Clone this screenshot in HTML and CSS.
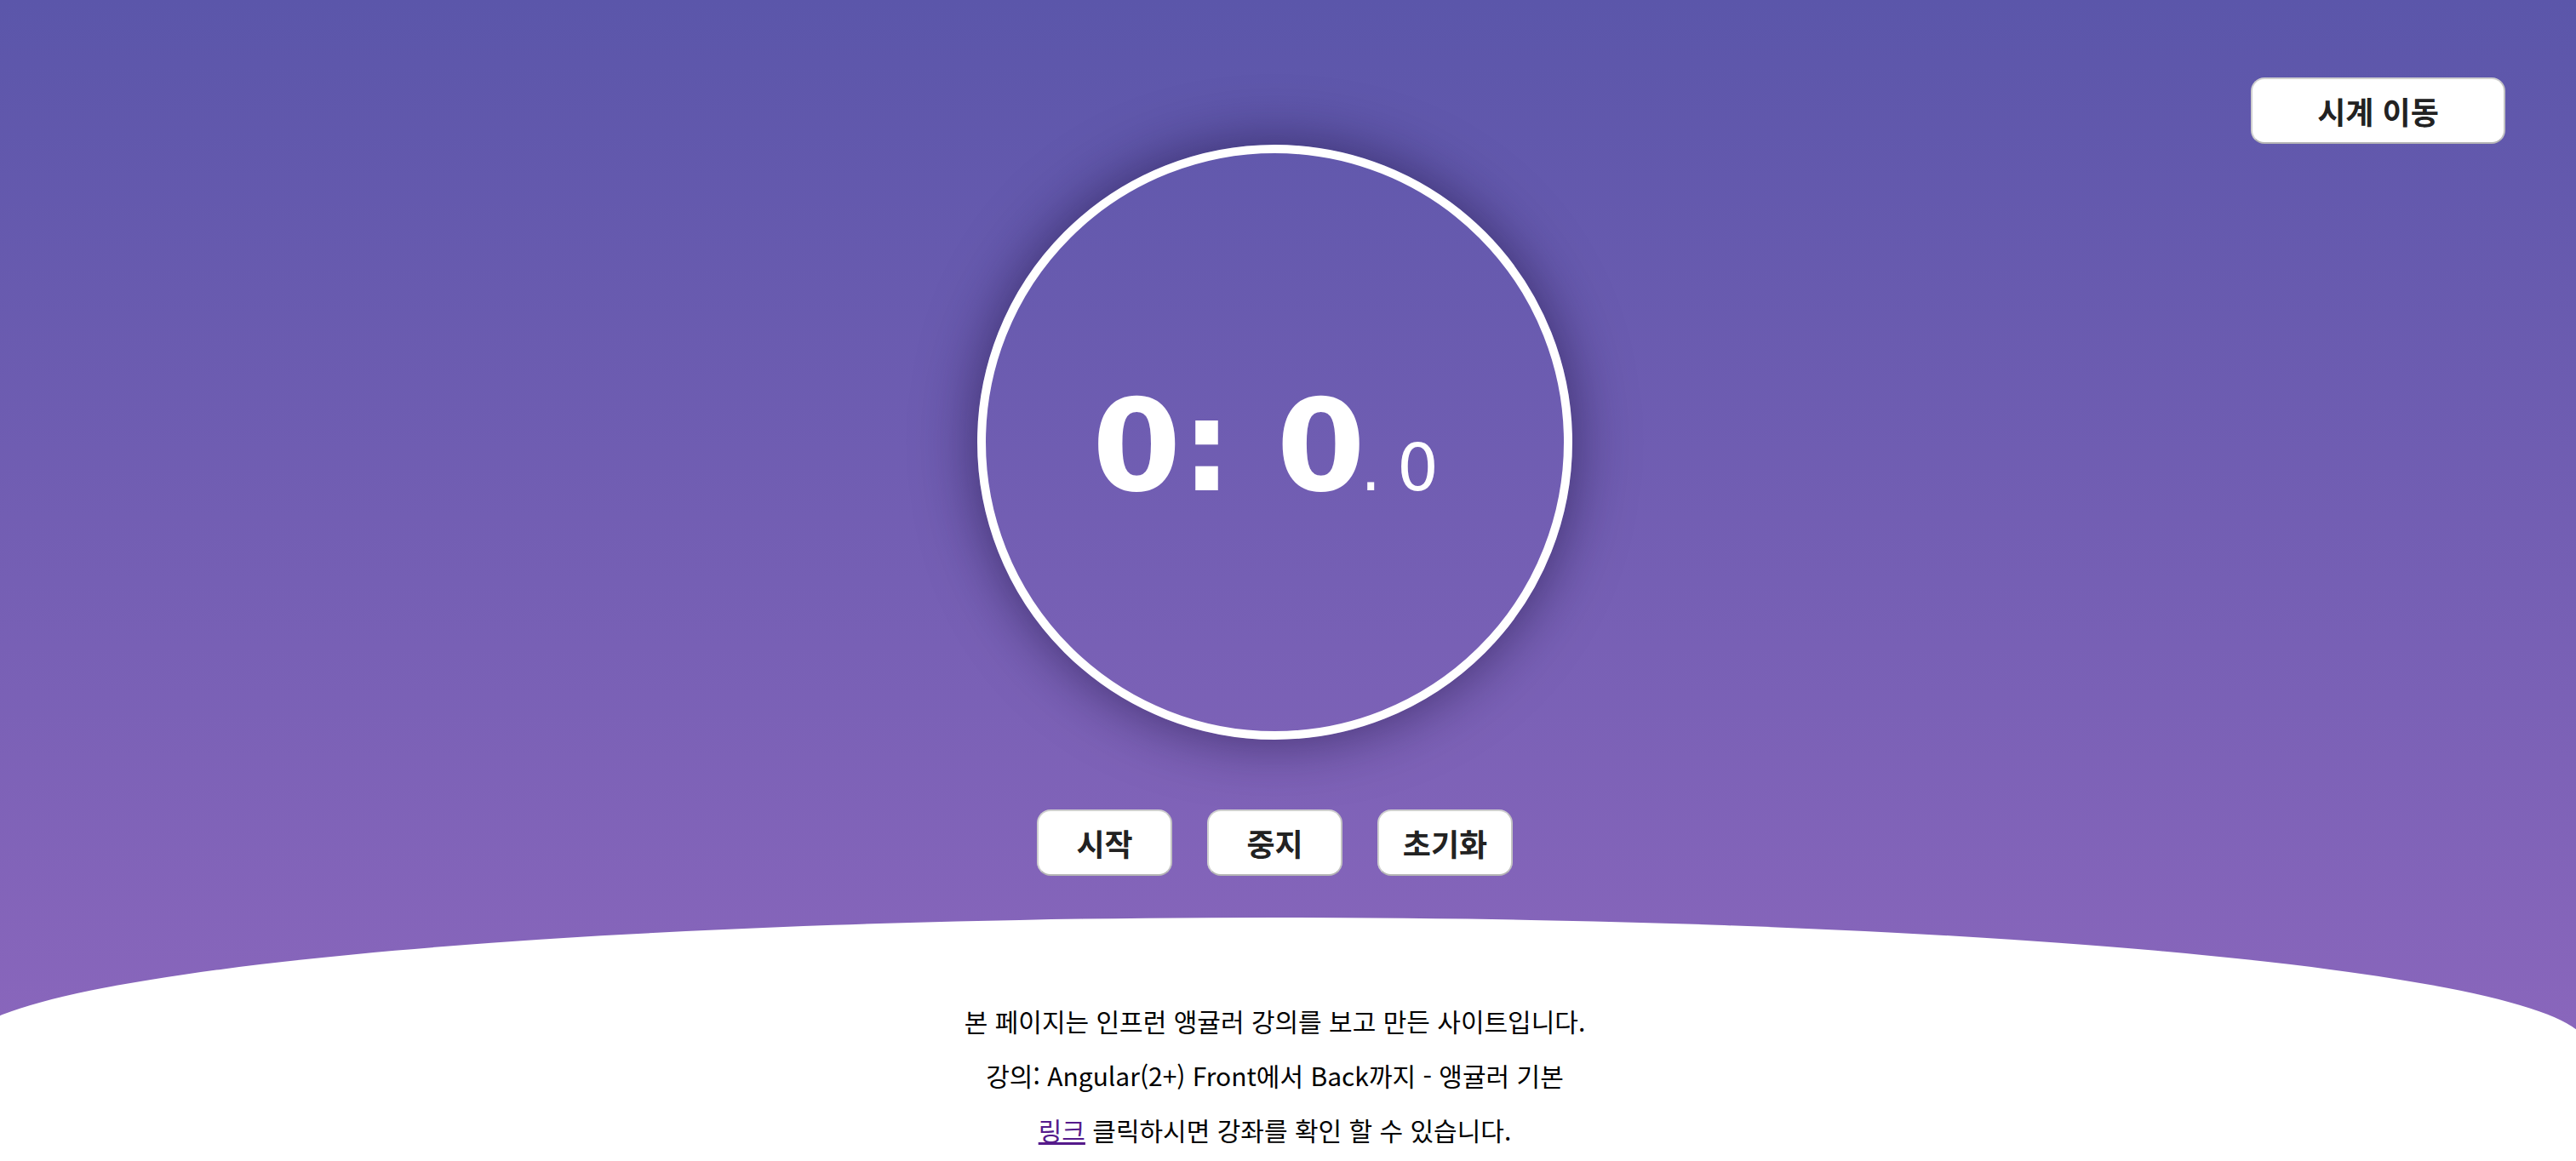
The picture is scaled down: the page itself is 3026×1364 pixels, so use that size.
FILE: index.html
```html
<!DOCTYPE html>
<html lang="ko">
<head>
<meta charset="utf-8">
<title>스톱워치</title>
<link rel="stylesheet" href="styles.css">
</head>
<body>
<div class="page">
  <header class="topbar">
    <button class="btn btn-wide" type="button">시계 이동</button>
  </header>
  <main class="main">
    <div class="dial">
      <div class="time"><span class="big">0: 0</span><span class="small">. 0</span></div>
    </div>
    <div class="controls">
      <button class="btn" type="button">시작</button>
      <button class="btn" type="button">중지</button>
      <button class="btn" type="button">초기화</button>
    </div>
  </main>
  <footer class="footer">
    <p>본 페이지는 인프런 앵귤러 강의를 보고 만든 사이트입니다.</p>
    <p>강의: Angular(2+) Front에서 Back까지 - 앵귤러 기본</p>
    <p><a class="link" href="#">링크</a> 클릭하시면 강좌를 확인 할 수 있습니다.</p>
  </footer>
</div>
</body>
</html>
```
FILE: styles.css
```css
html, body {
  margin: 0;
  padding: 0;
  height: 100%;
}
body {
  overflow: hidden;
  background: linear-gradient(to bottom, #5b56aa 0%, #8f68be 100%);
  font-family: "Noto Sans CJK KR", "Noto Sans", sans-serif;
}
.page {
  display: flex;
  flex-direction: column;
  align-items: center;
  padding-right: 31px;
  height: 1364px;
}
.topbar {
  align-self: stretch;
  display: flex;
  justify-content: flex-end;
  padding: 91px 52px 0 0;
}
.btn {
  box-sizing: border-box;
  height: 78px;
  width: 159px;
  background: #fff;
  border: 2px solid #cfcfcf;
  border-bottom-color: #b5b5b5;
  border-right-color: #c2c2c2;
  border-radius: 16px;
  font-family: "Noto Sans CJK KR", sans-serif;
  font-weight: 700;
  font-size: 36px;
  color: #222;
  padding: 0;
  line-height: 1;
}
.btn-wide {
  width: 299px;
}
.main {
  display: flex;
  flex-direction: column;
  align-items: center;
}
.dial {
  box-sizing: border-box;
  width: 699px;
  height: 699px;
  margin-top: 1px;
  border: 10px solid #fff;
  border-radius: 50%;
  box-shadow: 0 0 70px rgba(25, 15, 60, 0.6);
  display: flex;
  align-items: center;
  justify-content: center;
}
.time {
  font-family: "DejaVu Sans", sans-serif;
  color: #fff;
  white-space: pre;
  line-height: 1;
  padding: 8px 22px 0 0;
}
.big {
  font-weight: 700;
  font-size: 150px;
}
.small {
  font-size: 77px;
  margin-left: -6px;
  word-spacing: -6px;
}
.controls {
  display: flex;
  gap: 41px;
  margin-top: 82px;
}
.footer {
  flex: none;
  width: 3080px;
  height: 400px;
  margin-top: 49px;
  background: #fff;
  border-top-left-radius: 1540px 150px;
  border-top-right-radius: 1540px 150px;
  padding-top: 104px;
  text-align: center;
  color: #000;
  font-size: 30px;
}
.footer p {
  margin: 0 0 30px;
  line-height: 34px;
}
.link {
  color: #551a8b;
  text-decoration: underline;
}
```
